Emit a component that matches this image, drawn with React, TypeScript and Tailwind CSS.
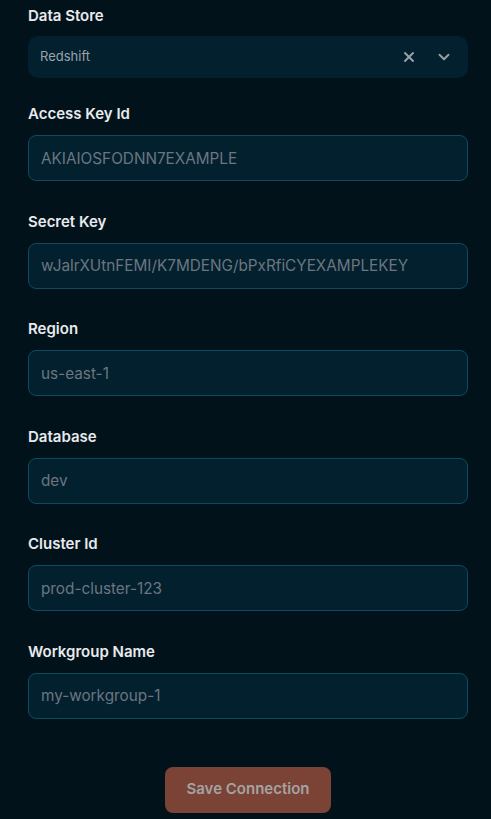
import { X, ChevronDown } from "lucide-react";

const fields = [
    { label: "Access Key Id", placeholder: "AKIAIOSFODNN7EXAMPLE" },
    { label: "Secret Key", placeholder: "wJalrXUtnFEMI/K7MDENG/bPxRfiCYEXAMPLEKEY" },
    { label: "Region", placeholder: "us-east-1" },
    { label: "Database", placeholder: "dev" },
    { label: "Cluster Id", placeholder: "prod-cluster-123" },
    { label: "Workgroup Name", placeholder: "my-workgroup-1" },
];

export default function App() {
    return (
        <div className="min-h-[819px] bg-[#02121b] pl-7 pr-[23px] pt-[5px] pb-6 font-['Inter',sans-serif]">
            {/* Data store select */}
            <div>
                <label className="block text-[15px] leading-[22px] font-semibold text-[#e8eaed] mb-[9px]">Data Store</label>
                <div className="h-[42px] rounded-[10px] bg-[#03202e] flex items-center pl-3 pr-3">
                    <span className="text-[13px] text-[#9aa3ab] flex-1">Redshift</span>
                    <X size={16} strokeWidth={3} className="text-[#9aa0a6] mr-[18px]" />
                    <ChevronDown size={18} strokeWidth={2.5} className="text-[#9aa0a6] mr-[3px]" />
                </div>
            </div>

            <div className="mt-[25px] flex flex-col gap-[29.5px]">
                {fields.map(f => (
                    <div key={f.label}>
                        <label className="block text-[15px] leading-[22px] font-semibold text-[#e8eaed] mb-[10px]">{f.label}</label>
                        <input
                            placeholder={f.placeholder}
                            className="w-full h-[46px] rounded-lg bg-[#03202e] border border-[#0d4a60] px-3 text-[15.3px] text-white placeholder:text-[#6b7680] outline-none"
                        />
                    </div>
                ))}
            </div>

            <div className="flex justify-center mt-[48px]">
                <button className="w-[166px] h-[46px] rounded-lg bg-[#7b4236] text-[15px] font-semibold text-[#a3a3a3]">
                    Save Connection
                </button>
            </div>
        </div>
    );
}
